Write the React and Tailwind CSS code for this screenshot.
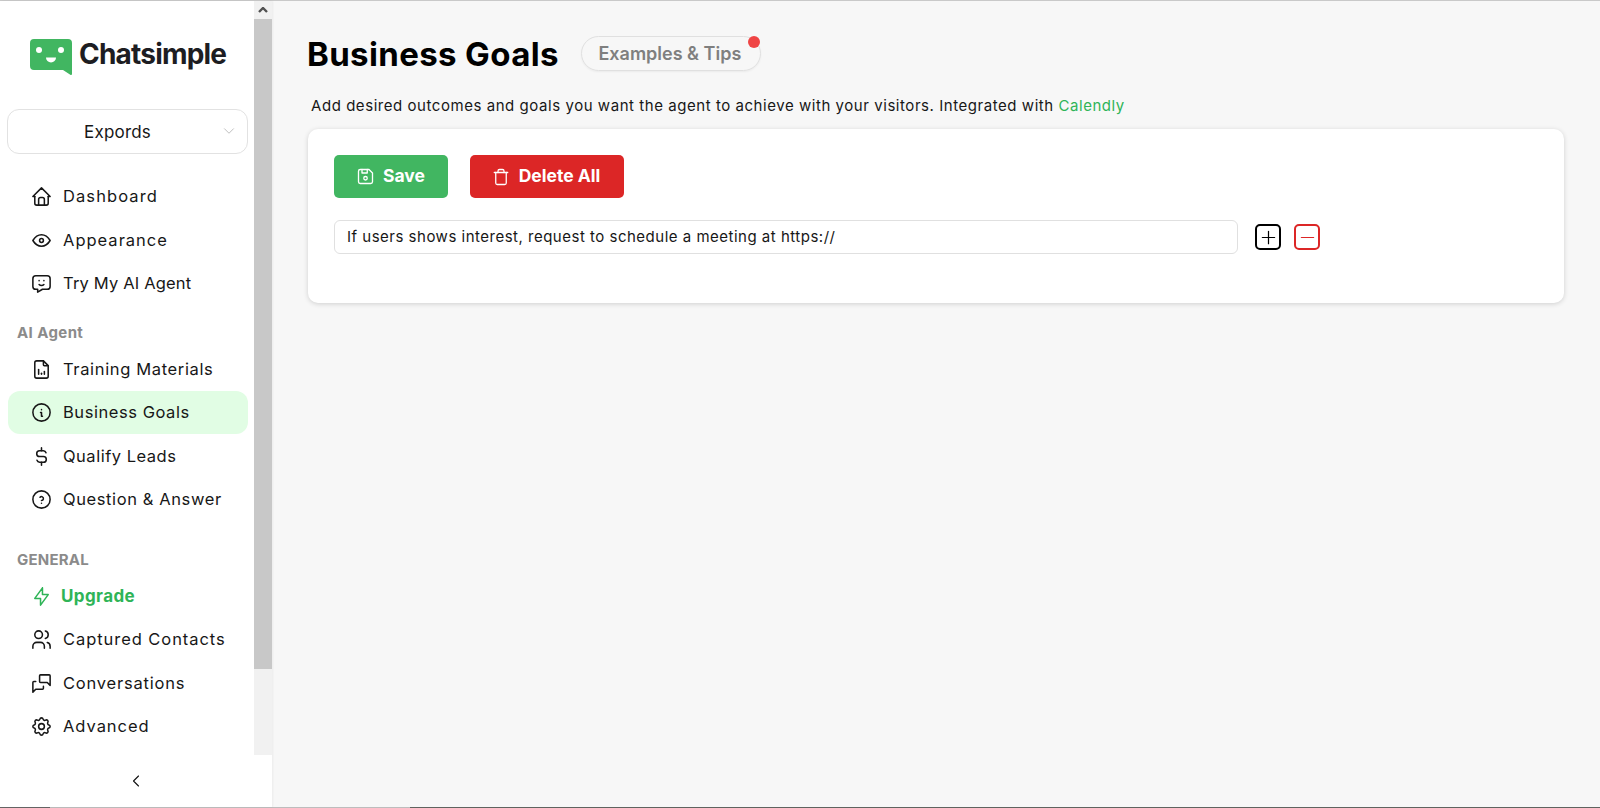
import {
  TbHome, TbEye, TbMessageChatbot, TbFileAnalytics, TbInfoCircle, TbCurrencyDollar, TbHelpCircle,
  TbBolt, TbUsers, TbMessages, TbSettings, TbChevronLeft, TbChevronDown, TbDeviceFloppy, TbPlus, TbMinus,
} from "react-icons/tb";
import { Trash } from "lucide-react";

function NavItem({ icon: Icon, label, active, track }) {
  return (
    <a href="#" className={`flex items-center h-[43.4px] ml-2 mr-[6px] pl-[22px] rounded-xl text-[#171717] ${active ? "bg-[#e1fde4]" : ""}`}>
      <Icon size={23} strokeWidth={1.6} className="shrink-0" />
      <span className={`ml-[10px] text-[16.5px] ${track}`}>{label}</span>
    </a>
  );
}

function Logo() {
  return (
    <svg width="42" height="36" viewBox="0 0 42 36" className="shrink-0">
      <path d="M4 0h34a4 4 0 0 1 4 4v31a1 1 0 0 1-1.7.7L33 31H4a4 4 0 0 1-4-4V4a4 4 0 0 1 4-4z" fill="#41b661" />
      <circle cx="9" cy="11" r="3" fill="#fff" />
      <circle cx="31" cy="11" r="3" fill="#fff" />
      <path d="M16 18.5h10a5 5 0 0 1-10 0z" fill="#fff" />
    </svg>
  );
}

export default function App() {
  return (
    <div className="h-[808px] flex flex-col bg-[#f7f7f7] overflow-hidden font-['Inter','Liberation_Sans',sans-serif]">
      <div className="h-px bg-[#c9c9c9] shrink-0" />
      <div className="flex flex-1 min-h-0">
        {/* SIDEBAR */}
        <aside className="relative w-[272px] shrink-0 bg-white flex flex-col shadow-[1px_0_2px_rgba(0,0,0,0.05)]">
          <div className="flex flex-1 min-h-0">
            <div className="w-[254px] shrink-0">
              <div className="flex items-center h-[37px] mt-[37px] ml-[30px]">
                <Logo />
                <span className="ml-[7px] mb-[5px] text-[28px] font-bold text-[#1d1d22] tracking-[-0.8px]">Chatsimple</span>
              </div>
              <div className="relative flex items-center justify-center h-[45px] mt-[34px] ml-[7px] mr-[6px] pt-[2px] border border-[#e2e2e2] rounded-xl text-[17px] text-[#171717] pr-5 tracking-[0.2px]">
                Expords
                <TbChevronDown size={18} strokeWidth={1} className="absolute right-[9px] top-[12px] text-[#aaa]" />
              </div>
              <nav className="mt-[21px]">
                <NavItem icon={TbHome} label="Dashboard" track="tracking-[1.09px]" />
                <NavItem icon={TbEye} label="Appearance" track="tracking-[1px]" />
                <NavItem icon={TbMessageChatbot} label="Try My AI Agent" track="tracking-[0.17px]" />
                <div className="h-[29.5px] mt-[13px] pl-[17px] flex items-center text-[15px] font-bold text-[#8b8b8b] tracking-[0.4px]">AI Agent</div>
                <NavItem icon={TbFileAnalytics} label="Training Materials" track="tracking-[0.64px]" />
                <NavItem icon={TbInfoCircle} label="Business Goals" active track="tracking-[0.55px]" />
                <NavItem icon={TbCurrencyDollar} label="Qualify Leads" track="tracking-[0.5px]" />
                <NavItem icon={TbHelpCircle} label="Question & Answer" track="tracking-[0.6px]" />
                <div className="h-[29px] mt-[24.5px] pl-[17px] flex items-center text-[15px] font-bold text-[#8b8b8b] tracking-[0.2px]">GENERAL</div>
                <a href="#" className="flex items-center h-[43.4px] ml-2 pl-[22px] text-[#2fb457]">
                  <TbBolt size={23} strokeWidth={1.6} className="shrink-0" />
                  <span className="ml-2 text-[17px] font-bold tracking-[0.4px]">Upgrade</span>
                </a>
                <NavItem icon={TbUsers} label="Captured Contacts" track="tracking-[0.94px]" />
                <NavItem icon={TbMessages} label="Conversations" track="tracking-[0.8px]" />
                <NavItem icon={TbSettings} label="Advanced" track="tracking-[0.96px]" />
              </nav>
            </div>
            {/* scrollbar */}
            <div className="w-[18px] h-[754px] bg-[#f1f1f1] flex flex-col">
              <div className="h-[18px] flex items-center justify-center text-[#505050]">
                <svg width="10" height="6" viewBox="0 0 10 6"><path d="M1 5l4-4 4 4" fill="none" stroke="currentColor" strokeWidth="2.4" /></svg>
              </div>
              <div className="h-[650px] bg-[#c8c8c8]" />
            </div>
          </div>
          <div className="h-[50px] shrink-0 flex items-center justify-center pb-[2px]">
            <TbChevronLeft size={20} strokeWidth={1.3} className="text-[#111]" />
          </div>
        </aside>

        {/* MAIN */}
        <main className="flex-1 min-w-0 pl-[35px] pr-9">
          <div className="flex items-center h-[34px] mt-[35px]">
            <h1 className="pt-[4px] text-[33px] font-bold text-black tracking-[0.37px]">Business Goals</h1>
            <button className="relative ml-[22px] w-[180px] h-[35px] pr-[2px] rounded-full border border-[#e0e0e0] text-[18px] font-semibold text-[#7f7f7f] shadow-xs">
              Examples & Tips
              <span className="absolute right-0 -top-[1px] w-3 h-3 rounded-full bg-[#ef4444]" />
            </button>
          </div>
          <p className="mt-[25px] ml-1 text-[15px] leading-[22px] text-[#171717] tracking-[0.55px]">
            Add desired outcomes and goals you want the agent to achieve with your visitors. Integrated with{" "}
            <a href="#" className="text-[#2fb457]">Calendly</a>
          </p>
          <section className="mt-[12px] ml-px h-[174px] bg-white rounded-[10px] shadow-[0_1px_5px_rgba(0,0,0,0.16)] pt-[26px] px-[26px]">
            <div className="flex gap-[22px]">
              <button className="flex items-center justify-center gap-[7px] w-[114px] h-[43px] pr-[2px] rounded-[5px] bg-[#41b661] text-white font-bold text-[17.5px]">
                <TbDeviceFloppy size={21} strokeWidth={1.5} /> Save
              </button>
              <button className="flex items-center justify-center gap-[9px] w-[154px] h-[43px] pr-[2px] rounded-[5px] bg-[#dc2626] text-white font-bold text-[17.5px]">
                <Trash size={18} strokeWidth={1.7} /> Delete All
              </button>
            </div>
            <div className="flex items-center mt-[22px]">
              <div className="w-[904px] h-[34px] flex items-center pl-3 border border-[#e0e0e0] rounded-md text-[15px] text-[#171717] tracking-[0.5px]">
                If users shows interest, request to schedule a meeting at https://
              </div>
              <button className="ml-[17px] w-[26px] h-[26px] flex items-center justify-center border-2 border-black rounded-[5px] text-black">
                <TbPlus size={21} strokeWidth={1.4} />
              </button>
              <button className="ml-[13px] w-[26px] h-[26px] flex items-center justify-center border-2 border-[#dc2626] rounded-[5px] text-[#dc2626]">
                <TbMinus size={21} strokeWidth={1.4} />
              </button>
            </div>
          </section>
        </main>
      </div>
      {/* bottom edge */}
      <div className="h-px shrink-0 bg-[#5f635f] flex">
        <div className="h-px w-[50px] bg-[#666]" />
        <div className="h-px w-[360px] bg-[#bdbdbd]" />
      </div>
    </div>
  );
}
